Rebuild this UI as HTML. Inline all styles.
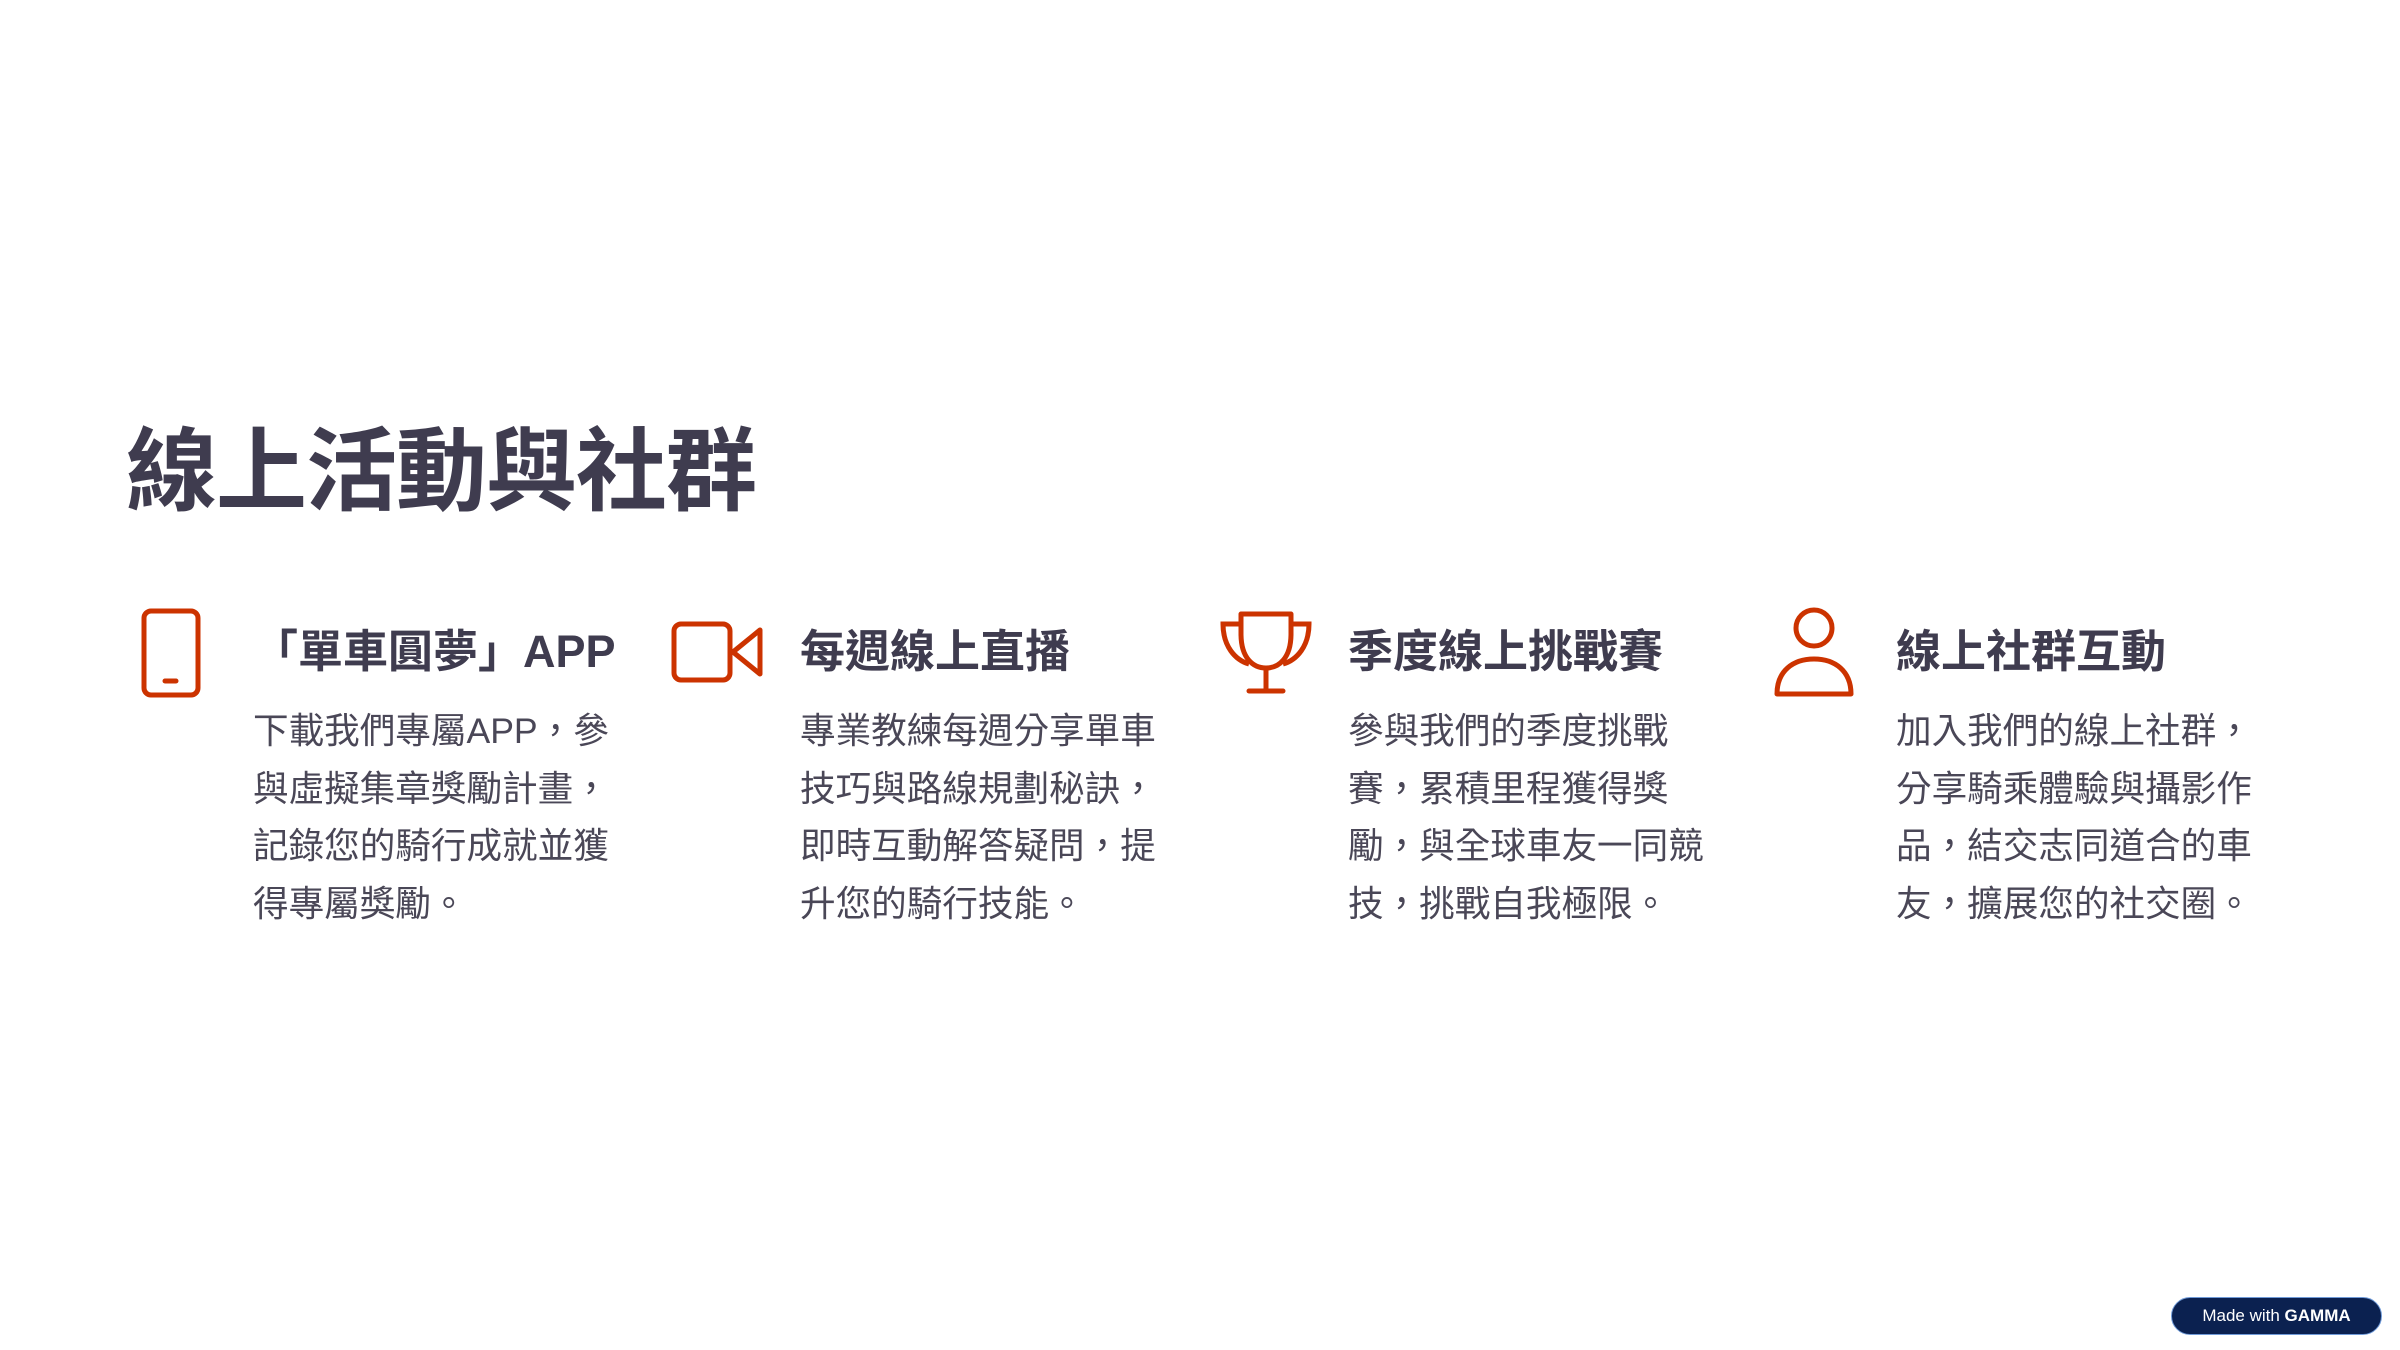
<!DOCTYPE html>
<html><head><meta charset="utf-8"><style>
*{margin:0;padding:0;box-sizing:border-box}
body{width:2400px;height:1350px;background:#fff;position:relative;overflow:hidden;font-family:"Liberation Sans","Noto Sans CJK TC",sans-serif;color:#3f3c4f}
h1{position:absolute;left:126px;top:413px;font-size:91px;font-weight:700;letter-spacing:-1px;line-height:120px;white-space:nowrap}
.h{position:absolute;font-size:45px;font-weight:700;line-height:60px;top:622px;white-space:nowrap}
.b{position:absolute;top:703px;font-size:35.6px;line-height:57.5px;width:380px;color:#4a4757}
svg{position:absolute}
.badge{position:absolute;left:2171px;top:1297px;width:211px;height:38px;border-radius:19px;background:#0b2150;border:1px solid #6f9ad8;color:#fff;font-size:17px;line-height:36px;text-align:center}
</style></head><body>
<h1>線上活動與社群</h1>

<svg style="left:140px;top:607px" width="62" height="92" viewBox="0 0 62 92"><rect x="4" y="4" width="54" height="84" rx="7" fill="none" stroke="#cc3300" stroke-width="5"/><line x1="25" y1="74" x2="36" y2="74" stroke="#cc3300" stroke-width="5" stroke-linecap="round"/></svg>
<div class="h" style="left:253px">「單車圓夢」APP</div>
<div class="b" style="left:253px">下載我們專屬APP，參與虛擬集章獎勵計畫，記錄您的騎行成就並獲得專屬獎勵。</div>

<svg style="left:671px;top:621px" width="94" height="62" viewBox="0 0 94 62"><rect x="3" y="3" width="56" height="56" rx="7" fill="none" stroke="#cc3300" stroke-width="5"/><path d="M62 31 L89 9 L89 53 Z" fill="none" stroke="#cc3300" stroke-width="5" stroke-linejoin="round"/></svg>
<div class="h" style="left:800px">每週線上直播</div>
<div class="b" style="left:800px">專業教練每週分享單車技巧與路線規劃秘訣，即時互動解答疑問，提升您的騎行技能。</div>

<svg style="left:1219px;top:610px" width="94" height="86" viewBox="0 0 94 86"><path d="M22 4 H72 V24 C72 48 60 58 47 58 C34 58 22 48 22 24 Z" fill="none" stroke="#cc3300" stroke-width="5" stroke-linejoin="round"/><path d="M22 14 H4 C4 36 16 50 30 54 M72 14 H90 C90 36 78 50 64 54" fill="none" stroke="#cc3300" stroke-width="5"/><line x1="47" y1="58" x2="47" y2="80" stroke="#cc3300" stroke-width="5"/><line x1="30" y1="81" x2="64" y2="81" stroke="#cc3300" stroke-width="5" stroke-linecap="round"/></svg>
<div class="h" style="left:1348px">季度線上挑戰賽</div>
<div class="b" style="left:1348px">參與我們的季度挑戰賽，累積里程獲得獎勵，與全球車友一同競技，挑戰自我極限。</div>

<svg style="left:1773px;top:605px" width="82" height="94" viewBox="0 0 82 94"><circle cx="41" cy="23" r="18" fill="none" stroke="#cc3300" stroke-width="5"/><path d="M4 89 C4 66 20 54 41 54 C62 54 78 66 78 89 Z" fill="none" stroke="#cc3300" stroke-width="5" stroke-linejoin="round"/></svg>
<div class="h" style="left:1896px">線上社群互動</div>
<div class="b" style="left:1896px">加入我們的線上社群，分享騎乘體驗與攝影作品，結交志同道合的車友，擴展您的社交圈。</div>

<div class="badge">Made with <b>GAMMA</b></div>
</body></html>
